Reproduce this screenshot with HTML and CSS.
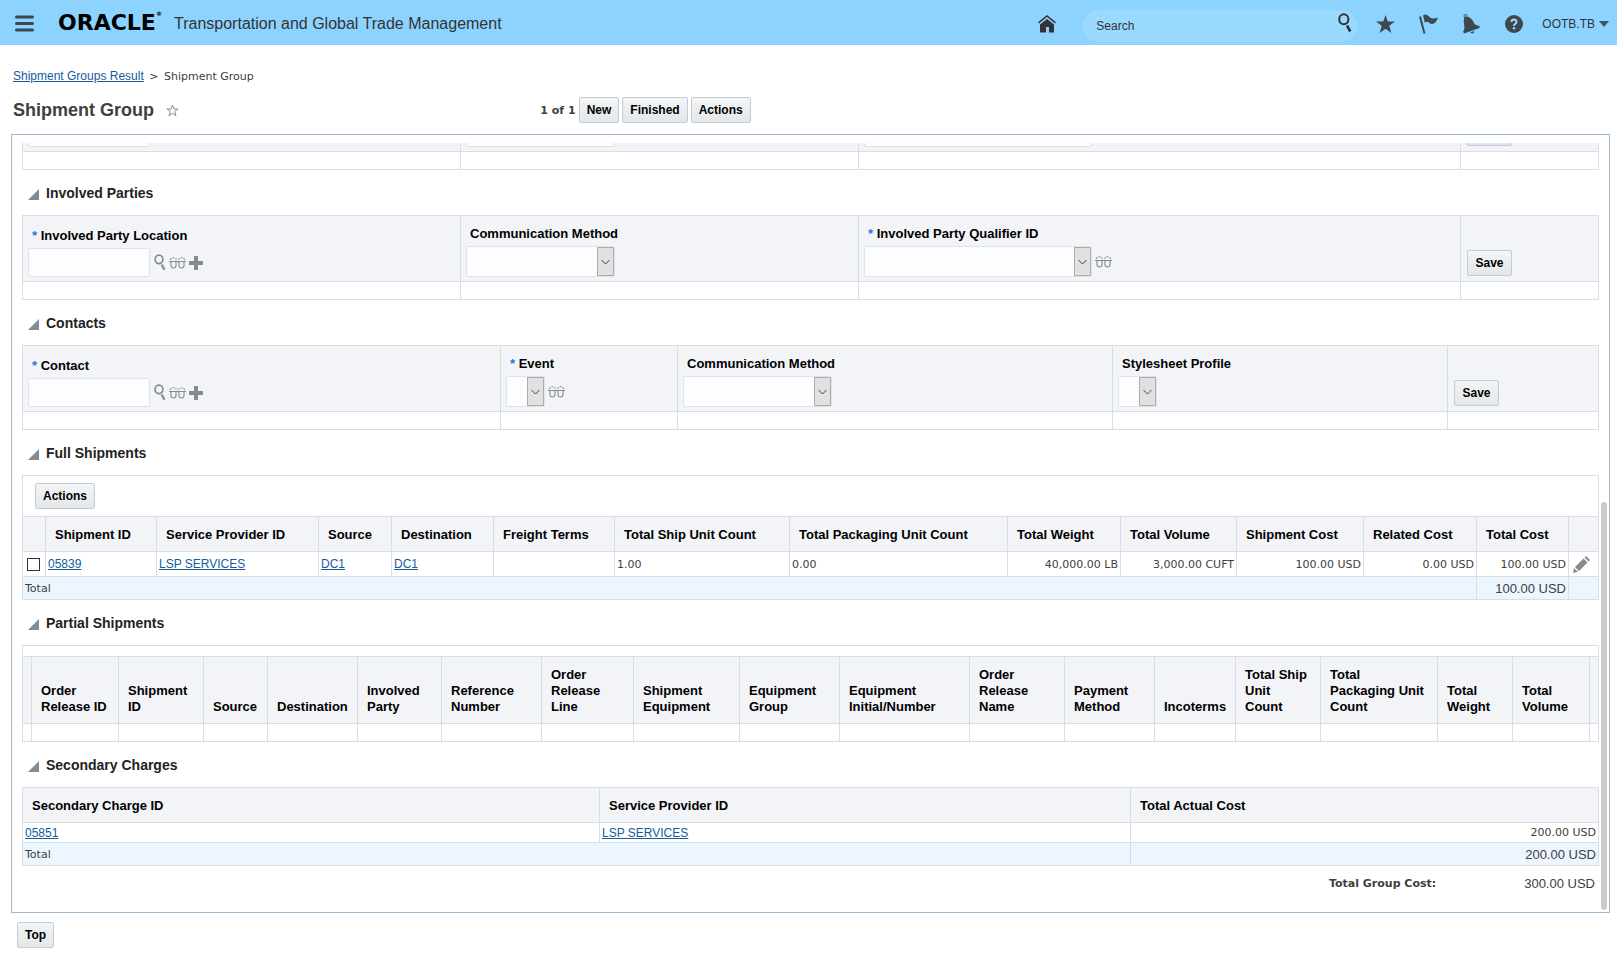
FILE: index.html
```html
<!DOCTYPE html>
<html lang="en">
<head>
    <meta charset="UTF-8">
    <meta name="viewport" content="width=device-width, initial-scale=1.0">
    <title>Shipment Group</title>
    <link rel="stylesheet" href="styles.css">
</head>
<body>
    <!-- shared icons -->
    <svg class="sprite" aria-hidden="true">
        <symbol id="icon-find" viewBox="0 0 14 20">
            <ellipse cx="5.8" cy="6.3" rx="4.6" ry="5" fill="none" stroke="currentColor" stroke-width="2"/>
            <path d="M9 12.5l3.3 6" stroke="currentColor" stroke-width="2.6" fill="none"/>
        </symbol>
        <symbol id="icon-glasses" viewBox="0 0 17 12">
            <path d="M0 4.500h17M2 4.500v4q0 2.500 2.500 2.500t2.500-2.500v-4M10 4.500v4q0 2.500 2.500 2.500t2.500-2.500v-4M1 2.800L2.500 1.300M3.500.8h2M6.500 1.500l1 1M16 2.800L14.500 1.300M13.500.8h-2M10.500 1.500l-1 1" fill="none" stroke="currentColor" stroke-width="1.100"/>
        </symbol>
        <symbol id="icon-plus" viewBox="0 0 14 14">
            <path d="M5 0h4v5h5v4H9v5H5V9H0V5h5z" fill="currentColor"/>
        </symbol>
    </svg>

    <header class="topbar">
        <button class="icon-btn menu-btn" aria-label="Menu">
            <svg width="19" height="17" viewBox="0 0 19 17"><path d="M1.500 2h16M1.500 8.500h16M1.500 15h16" stroke="#3b464d" stroke-width="3" stroke-linecap="round"/></svg>
        </button>
        <span class="logo">ORACLE<sup>®</sup></span>
        <span class="app-name">Transportation and Global Trade Management</span>
        <nav class="tools">
            <button class="icon-btn" aria-label="Home">
                <svg width="18" height="18" viewBox="0 0 18 18"><path d="M.5 7.800L9 1l8.500 6.800" fill="none" stroke="#333" stroke-width="1.500"/><path d="M2 9.500l7-5.500 7 5.500v8h-5V12H8v5.500H2z" fill="#333"/></svg>
            </button>
            <form class="search">
                <input type="text" placeholder="Search" aria-label="Search">
                <button type="button" class="icon-btn" aria-label="Find"><svg width="14" height="20"><use href="#icon-find"/></svg></button>
            </form>
            <button class="icon-btn" aria-label="Favorites">
                <svg width="19" height="18" viewBox="0 0 19 18"><path d="M9.500 0l2.300 6.500H19l-5.700 4.300L15.300 18l-5.800-4.200L3.700 18l2-7.200L0 6.500h7.200z" fill="#3d484f"/></svg>
            </button>
            <button class="icon-btn" aria-label="Flags">
                <svg width="19" height="20" viewBox="0 0 19 20"><path d="M1 2.500L5.500 19.500" stroke="#3d484f" stroke-width="2"/><path d="M4 1.500Q7-.8 9.500 2T14 4.500Q16.500 4.500 19 3.500Q17 9.500 13 10Q11.500 10 10 8.500T5.800 8.500z" fill="#3d484f"/></svg>
            </button>
            <button class="icon-btn" aria-label="Notifications">
                <svg width="19" height="20" viewBox="0 0 19 20"><circle cx="3.500" cy="2" r="1.500" fill="none" stroke="#3d484f"/><path d="M2 3.500Q6 1.500 9.500 5Q11.500 7.500 12.500 10Q14 11.500 17.500 12V14L2 19.500L1.200 17.500Q3 15 2.200 11T2 3.500zM8 18.500l4-1.500q.3 2.500-2 2.500z" fill="#3d484f"/></svg>
            </button>
            <button class="icon-btn" aria-label="Help">
                <svg width="18" height="18" viewBox="0 0 18 18"><circle cx="9" cy="9" r="9" fill="#3d484f"/><path d="M6.500 7Q6.500 4.500 9 4.500T11.500 7Q11.500 8.200 10 9Q9 9.600 9 11" fill="none" stroke="#9bdaff" stroke-width="2"/><circle cx="9" cy="13.300" r="1.200" fill="#9bdaff"/></svg>
            </button>
            <button class="icon-btn user">OOTB.TB
                <svg width="10" height="6" viewBox="0 0 10 6"><path d="M0 0h10L5 6z" fill="#3d5563"/></svg>
            </button>
        </nav>
    </header>

    <main>
        <div class="breadcrumb"><a href="#">Shipment Groups Result</a> <span>&gt;</span> <span>Shipment Group</span></div>
        <div class="title-row">
            <div class="title">
                <h1>Shipment Group</h1>
                <svg width="13" height="13" viewBox="0 0 13 13"><path d="M6.500 1l1.400 4h4.200L8.700 7.500l1.300 4.300-3.500-2.600L3 11.800l1.300-4.300L.9 5h4.200z" fill="none" stroke="#8a8f92"/></svg>
            </div>
            <div class="actions">
                <span class="pager">1 of 1</span>
                <button class="btn">New</button>
                <button class="btn">Finished</button>
                <button class="btn">Actions</button>
            </div>
        </div>

        <div class="panel">
            <div class="scroll-area">
                <table class="grid parties">
                    <colgroup><col><col><col><col></colgroup>
                    <tr class="form-row">
                        <td><div class="field"><input type="text" aria-label="Reference"></div></td>
                        <td><div class="field"><input type="text" class="w-md" aria-label="Reference value"></div></td>
                        <td><div class="field"><input type="text" class="w-lg" aria-label="Reference qualifier"></div></td>
                        <td><div class="field"><button class="btn" aria-label="Save reference"></button></div></td>
                    </tr>
                    <tr class="empty-row"><td></td><td></td><td></td><td></td></tr>
                </table>

                <h2>Involved Parties</h2>
                <table class="grid parties">
                    <colgroup><col><col><col><col></colgroup>
                    <tr class="form-row">
                        <td>
                            <label for="partyLocation"><i>*</i> Involved Party Location</label>
                            <div class="field">
                                <input type="text" id="partyLocation">
                                <svg class="find" width="12" height="17"><use href="#icon-find"/></svg>
                                <svg width="17" height="12"><use href="#icon-glasses"/></svg>
                                <svg width="14" height="14"><use href="#icon-plus"/></svg>
                            </div>
                        </td>
                        <td>
                            <label for="partyMethod">Communication Method</label>
                            <div class="field"><select id="partyMethod" class="w-md"><option></option></select></div>
                        </td>
                        <td>
                            <label for="qualifier"><i>*</i> Involved Party Qualifier ID</label>
                            <div class="field"><select id="qualifier" class="w-lg"><option></option></select><svg width="17" height="12"><use href="#icon-glasses"/></svg></div>
                        </td>
                        <td><div class="field"><button class="btn">Save</button></div></td>
                    </tr>
                    <tr class="empty-row"><td></td><td></td><td></td><td></td></tr>
                </table>

                <h2>Contacts</h2>
                <table class="grid contacts">
                    <colgroup><col><col><col><col><col></colgroup>
                    <tr class="form-row">
                        <td>
                            <label for="contact"><i>*</i> Contact</label>
                            <div class="field">
                                <input type="text" id="contact">
                                <svg class="find" width="12" height="17"><use href="#icon-find"/></svg>
                                <svg width="17" height="12"><use href="#icon-glasses"/></svg>
                                <svg width="14" height="14"><use href="#icon-plus"/></svg>
                            </div>
                        </td>
                        <td>
                            <label for="event"><i>*</i> Event</label>
                            <div class="field"><select id="event"><option></option></select><svg width="17" height="12"><use href="#icon-glasses"/></svg></div>
                        </td>
                        <td>
                            <label for="contactMethod">Communication Method</label>
                            <div class="field"><select id="contactMethod" class="w-md"><option></option></select></div>
                        </td>
                        <td>
                            <label for="stylesheet">Stylesheet Profile</label>
                            <div class="field"><select id="stylesheet"><option></option></select></div>
                        </td>
                        <td><div class="field"><button class="btn">Save</button></div></td>
                    </tr>
                    <tr class="empty-row"><td></td><td></td><td></td><td></td><td></td></tr>
                </table>

                <h2>Full Shipments</h2>
                <div class="toolbar"><button class="btn">Actions</button></div>
                <table class="grid full">
                    <colgroup><col><col><col><col><col><col><col><col><col><col><col><col><col><col></colgroup>
                    <tr>
                        <th></th>
                        <th>Shipment ID</th>
                        <th>Service Provider ID</th>
                        <th>Source</th>
                        <th>Destination</th>
                        <th>Freight Terms</th>
                        <th>Total Ship Unit Count</th>
                        <th>Total Packaging Unit Count</th>
                        <th>Total Weight</th>
                        <th>Total Volume</th>
                        <th>Shipment Cost</th>
                        <th>Related Cost</th>
                        <th>Total Cost</th>
                        <th></th>
                    </tr>
                    <tr class="data-row">
                        <td class="check"><input type="checkbox" aria-label="Select 05839"></td>
                        <td><a href="#">05839</a></td>
                        <td><a href="#">LSP SERVICES</a></td>
                        <td><a href="#">DC1</a></td>
                        <td><a href="#">DC1</a></td>
                        <td></td>
                        <td>1.00</td>
                        <td>0.00</td>
                        <td class="num">40,000.00 LB</td>
                        <td class="num">3,000.00 CUFT</td>
                        <td class="num">100.00 USD</td>
                        <td class="num">0.00 USD</td>
                        <td class="num">100.00 USD</td>
                        <td>
                            <button class="icon-btn edit" aria-label="Edit"><svg width="17" height="17" viewBox="0 0 17 17"><path d="M0 17l1-5 3.800 3.800zM2 11l8.500-8.500 4 4L6 15zM11.500 1.500L13 0l4 4-1.500 1.500z" fill="#868b8f"/></svg></button>
                        </td>
                    </tr>
                    <tr class="total-row">
                        <td colspan="12">Total</td>
                        <td class="num">100.00 USD</td>
                        <td></td>
                    </tr>
                </table>

                <h2>Partial Shipments</h2>
                <div class="toolbar slim"></div>
                <table class="grid partial">
                    <colgroup><col><col><col><col><col><col><col><col><col><col><col><col><col><col><col><col><col><col><col></colgroup>
                    <tr>
                        <th></th>
                        <th>Order<br>Release ID</th>
                        <th>Shipment<br>ID</th>
                        <th>Source</th>
                        <th>Destination</th>
                        <th>Involved<br>Party</th>
                        <th>Reference<br>Number</th>
                        <th>Order<br>Release<br>Line</th>
                        <th>Shipment<br>Equipment</th>
                        <th>Equipment<br>Group</th>
                        <th>Equipment<br>Initial/Number</th>
                        <th>Order<br>Release<br>Name</th>
                        <th>Payment<br>Method</th>
                        <th>Incoterms</th>
                        <th>Total Ship<br>Unit<br>Count</th>
                        <th>Total<br>Packaging Unit<br>Count</th>
                        <th>Total<br>Weight</th>
                        <th>Total<br>Volume</th>
                        <th></th>
                    </tr>
                    <tr class="empty-row"><td></td><td></td><td></td><td></td><td></td><td></td><td></td><td></td><td></td><td></td><td></td><td></td><td></td><td></td><td></td><td></td><td></td><td></td><td></td></tr>
                </table>

                <h2>Secondary Charges</h2>
                <table class="grid charges">
                    <colgroup><col><col><col></colgroup>
                    <tr>
                        <th>Secondary Charge ID</th>
                        <th>Service Provider ID</th>
                        <th>Total Actual Cost</th>
                    </tr>
                    <tr class="data-row">
                        <td><a href="#">05851</a></td>
                        <td><a href="#">LSP SERVICES</a></td>
                        <td class="num">200.00 USD</td>
                    </tr>
                    <tr class="total-row">
                        <td colspan="2">Total</td>
                        <td class="num">200.00 USD</td>
                    </tr>
                </table>

                <div class="group-cost"><b>Total Group Cost:</b><span>300.00 USD</span></div>
            </div>
            <div class="scroll-thumb"></div>
        </div>

        <div class="bottom"><button class="btn">Top</button></div>
    </main>
</body>
</html>
```

FILE: styles.css
```css
* {
    box-sizing: border-box;
}
body {
    margin: 0;
    background: #fff;
    color: #404040;
    font: 11px "DejaVu Sans", Verdana, sans-serif;
}
a {
    color: #145c9e;
    font: 12px "Liberation Sans", Arial, sans-serif;
}
svg {
    display: block;
    flex: none;
}
.sprite {
    position: absolute;
    width: 0;
    height: 0;
}

/* buttons */
.btn {
    height: 26px;
    min-width: 36px;
    padding: 0 7px;
    border: 1px solid #c1ccd5;
    border-radius: 2px;
    background: linear-gradient(#f3f5f6, #e3e7ea);
    color: #000;
    font: bold 12px "Liberation Sans", Arial, sans-serif;
}
.icon-btn {
    display: flex;
    align-items: center;
    padding: 0;
    border: 0;
    background: none;
    color: #333;
}

/* top bar */
.topbar {
    display: flex;
    align-items: center;
    height: 45px;
    padding: 3px 8px 0 15px;
    background: #8dd3ff;
    font-family: "Liberation Sans", Arial, sans-serif;
}
.menu-btn {
    margin-bottom: 2px;
}
.logo {
    width: 102px;
    margin: 0 14px 2px 24px;
    color: #000;
    font: bold 22px/24px "DejaVu Sans", sans-serif;
    white-space: nowrap;
}
.logo sup {
    font-size: 6px;
    line-height: 6px;
    vertical-align: top;
}
.app-name {
    color: #333;
    font-size: 16px;
}
.tools {
    display: flex;
    align-items: center;
    gap: 24px;
    margin-left: auto;
}
.search {
    display: flex;
    align-items: center;
    width: 274px;
    height: 32px;
    margin: 4px 0 0 3px;
    padding: 0 5px 0 13px;
    border-radius: 16px;
    background: #9bdaff;
    margin-right: -5px;
}
.search input {
    flex: 1;
    min-width: 0;
    padding: 0;
    border: 0;
    background: none;
    font: 12px "Liberation Sans", Arial, sans-serif;
}
.search input::placeholder {
    color: #333;
}
.search .icon-btn {
    margin-bottom: 6px;
}
.user {
    gap: 4px;
    margin-left: -5px;
    font: 12px "Liberation Sans", Arial, sans-serif;
}

/* page title */
.breadcrumb {
    padding: 23px 13px 0;
    line-height: 18px;
}
.breadcrumb span {
    margin-left: 2px;
}
.title-row {
    display: grid;
    grid-template-columns: 1fr 2fr;
    align-items: center;
    margin: 11px 22px 11px 13px;
}
.title {
    display: flex;
    align-items: center;
    gap: 12px;
}
h1 {
    margin: 0;
    font: bold 18px "Liberation Sans", Arial, sans-serif;
}
.actions {
    display: flex;
    align-items: center;
    gap: 3px;
}
.pager {
    font-weight: bold;
}

/* scrolled panel, shown at the end of its content */
.panel {
    display: flex;
    gap: 2px;
    height: calc(100vh - 180px);
    margin: 0 7px 0 11px;
    padding: 8px 2px 0 10px;
    border: 1px solid #9dbad5;
}
.scroll-area {
    flex: 1;
    min-width: 0;
    display: flex;
    flex-direction: column;
    justify-content: flex-end;
    overflow: hidden;
}
.scroll-area > * {
    flex: none;
}
.scroll-thumb {
    align-self: flex-end;
    width: 6px;
    height: 53%;
    margin-bottom: 2px;
    border-radius: 3px;
    background: #cbcbcb;
}
h2 {
    display: flex;
    align-items: center;
    gap: 7px;
    height: 45px;
    margin: 0;
    padding-left: 6px;
    color: #222;
    font: bold 14px "Liberation Sans", Arial, sans-serif;
}
h2::before {
    content: "";
    width: 11px;
    height: 11px;
    margin-top: 4px;
    background: #868b8f;
    clip-path: polygon(100% 0, 100% 100%, 0 100%);
}

/* tables */
.grid {
    width: 100%;
    table-layout: fixed;
    border-collapse: collapse;
}
.grid th, .grid td {
    border: 1px solid #d6dfe6;
    text-align: left;
}
.grid th {
    height: 35px;
    padding: 2px 4px 0 9px;
    background: #f2f4f8;
    color: #000;
    font: bold 13px/16px "Liberation Sans", Arial, sans-serif;
}
.grid td {
    padding: 0 2px;
    white-space: nowrap;
}
.grid .num {
    text-align: right;
}
.empty-row td {
    height: 18px;
}
.total-row td {
    height: 23px;
    background: #edf5fe;
}
.total-row .num, .group-cost span {
    font: 13px "Liberation Sans", Arial, sans-serif;
}
.toolbar {
    height: 41px;
    padding: 7px 12px;
    border: 1px solid #d6dfe6;
    border-bottom: 0;
}
.slim {
    height: 11px;
    padding: 0;
}

/* entry rows */
.form-row td {
    height: 66px;
    padding: 0 5px 4px;
    background: #f2f4f8;
    vertical-align: bottom;
}
.form-row label {
    display: block;
    margin: 0 0 4px 4px;
    color: #000;
    font: bold 13px/16px "Liberation Sans", Arial, sans-serif;
}
.form-row i {
    color: #1f74ee;
    font-style: normal;
}
.field {
    display: flex;
    align-items: center;
    gap: 3px;
    color: #868b8f;
}
.field input {
    width: 122px;
    height: 29px;
    border: 1px solid #dfe4e8;
    border-radius: 2px;
    background: #fcfdfe;
}
.field select {
    appearance: none;
    width: 39px;
    height: 31px;
    border: 1px solid #dfe4e8;
    border-radius: 2px;
    background: #fcfdfe url("data:image/svg+xml,%3Csvg xmlns='http://www.w3.org/2000/svg' width='17' height='29'%3E%3Crect x='.5' y='.5' width='16' height='28' fill='%23e1e1e1' stroke='%23a9adac'/%3E%3Cpath d='M4.500 13l4 4 4-4' fill='none' stroke='%23444'/%3E%3C/svg%3E") no-repeat right center;
}
.field .w-md {
    width: 149px;
}
.field .w-lg {
    width: 228px;
}
.field .btn {
    min-width: 45px;
    margin: 0 0 1px 1px;
}
.find {
    margin-left: 1px;
}

/* column widths */
.parties col:nth-child(1) { width: 438px; }
.parties col:nth-child(2) { width: 398px; }
.parties col:nth-child(4) { width: 138px; }

.contacts col:nth-child(1) { width: 478px; }
.contacts col:nth-child(2) { width: 177px; }
.contacts col:nth-child(4) { width: 335px; }
.contacts col:nth-child(5) { width: 151px; }

.full col:nth-child(1) { width: 23px; }
.full col:nth-child(2) { width: 111px; }
.full col:nth-child(3) { width: 162px; }
.full col:nth-child(4) { width: 73px; }
.full col:nth-child(5) { width: 102px; }
.full col:nth-child(6) { width: 121px; }
.full col:nth-child(7) { width: 175px; }
.full col:nth-child(9) { width: 113px; }
.full col:nth-child(10) { width: 116px; }
.full col:nth-child(11) { width: 127px; }
.full col:nth-child(12) { width: 113px; }
.full col:nth-child(13) { width: 92px; }
.full col:nth-child(14) { width: 30px; }
.full .data-row td {
    height: 25px;
}
.full .check {
    padding-left: 4px;
}
.check input {
    display: block;
    appearance: none;
    width: 13px;
    height: 13px;
    margin: 0;
    border: 1px solid #333;
    background: #fff;
}
.edit {
    margin-left: 2px;
}

.partial th {
    height: 67px;
    padding: 0 4px 8px 9px;
    vertical-align: bottom;
}
.partial col:nth-child(1) { width: 9px; }
.partial col:nth-child(2) { width: 87px; }
.partial col:nth-child(3) { width: 85px; }
.partial col:nth-child(4) { width: 64px; }
.partial col:nth-child(5) { width: 90px; }
.partial col:nth-child(6) { width: 84px; }
.partial col:nth-child(7) { width: 100px; }
.partial col:nth-child(8) { width: 92px; }
.partial col:nth-child(9) { width: 106px; }
.partial col:nth-child(10) { width: 100px; }
.partial col:nth-child(12) { width: 95px; }
.partial col:nth-child(13) { width: 90px; }
.partial col:nth-child(14) { width: 81px; }
.partial col:nth-child(15) { width: 85px; }
.partial col:nth-child(16) { width: 117px; }
.partial col:nth-child(17) { width: 75px; }
.partial col:nth-child(18) { width: 77px; }
.partial col:nth-child(19) { width: 9px; }
.partial th:first-child, .partial th:last-child,
.partial td:first-child, .partial td:last-child {
    padding: 0;
}

.charges col:nth-child(1) { width: 577px; }
.charges col:nth-child(2) { width: 531px; }
.charges .data-row td {
    height: 20px;
}

.group-cost {
    display: flex;
    justify-content: flex-end;
    align-items: center;
    gap: 88px;
    height: 46px;
    padding: 0 4px 12px 0;
}
.bottom {
    padding: 9px 17px;
}
```
